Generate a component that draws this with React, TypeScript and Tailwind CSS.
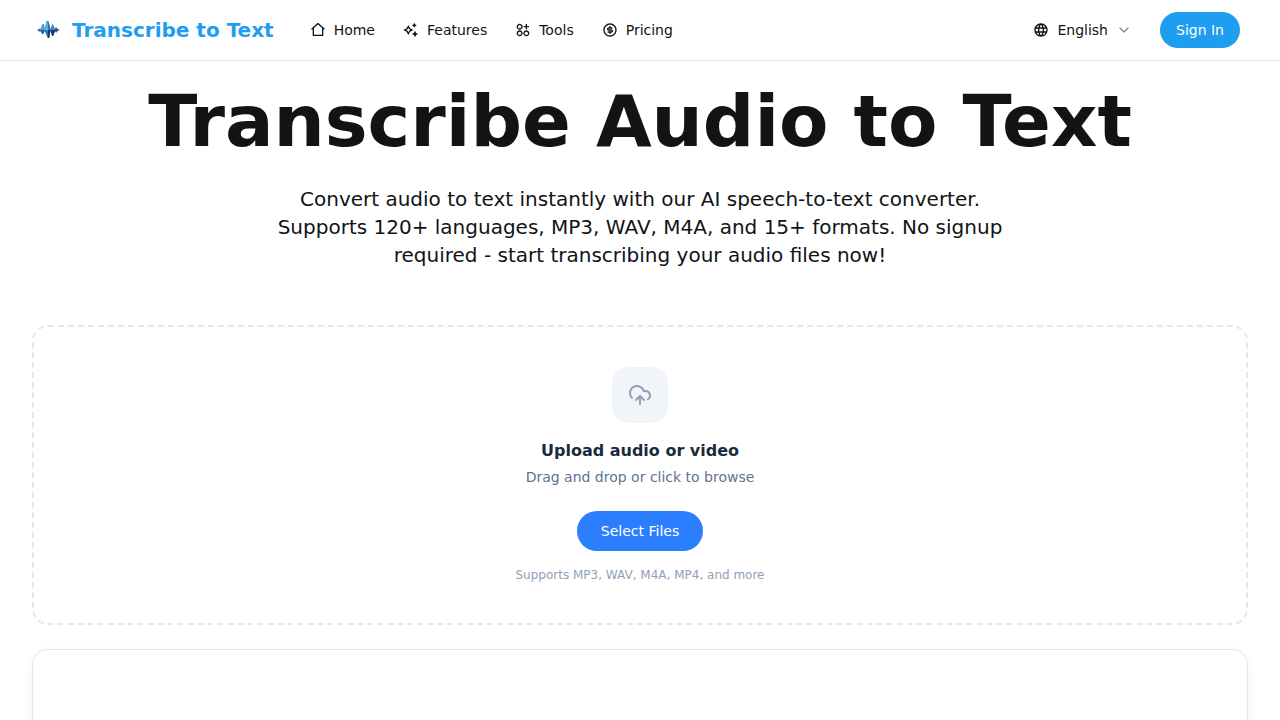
import { ChevronDown, CloudUpload } from "lucide-react";
import { MdLanguage } from "react-icons/md";
import {
  RiApps2AddLine,
  RiHome2Line,
  RiMoneyDollarCircleLine,
  RiSparkling2Line,
} from "react-icons/ri";

const navItems = [
  { title: "Home", icon: RiHome2Line },
  { title: "Features", icon: RiSparkling2Line },
  { title: "Tools", icon: RiApps2AddLine },
  { title: "Pricing", icon: RiMoneyDollarCircleLine },
];

export default function App() {
  return (
    <div className="min-h-screen w-full bg-white font-['DejaVu_Sans',sans-serif] text-[#111315]">
      <Header />

      <main className="px-8 pt-6">
        <section className="flex flex-col items-center gap-7 text-center">
          <h1 className="text-7xl leading-none font-bold">
            Transcribe Audio to Text
          </h1>
          <p className="max-w-3xl text-xl leading-7">
            Convert audio to text instantly with our AI speech-to-text
            converter. Supports 120+ languages, MP3, WAV, M4A, and 15+ formats.
            No signup required - start transcribing your audio files now!
          </p>
        </section>

        <UploadArea />

        {/* Transcript panel */}
        <section className="mt-6 min-h-96 rounded-2xl border border-gray-200 shadow-[0_4px_12px_rgba(0,0,0,0.05)]" />
      </main>
    </div>
  );
}

const Header = () => {
  return (
    <header className="flex items-center justify-between border-b border-gray-200 py-3 pr-10 pl-8">
      <div className="flex items-center gap-9">
        <a href="#" className="flex items-center gap-2">
          <Logo />
          <span className="text-xl font-bold text-[#1e9df1]">
            Transcribe to Text
          </span>
        </a>
        <nav className="flex items-center gap-7">
          {navItems.map((item) => (
            <a
              href="#"
              className="flex items-center gap-2 text-sm"
              key={item.title}
            >
              <item.icon className="size-4" />
              {item.title}
            </a>
          ))}
        </nav>
      </div>

      <div className="flex items-center gap-7">
        <button type="button" className="flex items-center gap-2 text-sm">
          <MdLanguage className="size-4" />
          English
          <ChevronDown className="size-4 opacity-50" />
        </button>
        <button
          type="button"
          className="h-9 rounded-full bg-[#1e9df1] px-4 text-sm text-white"
        >
          Sign In
        </button>
      </div>
    </header>
  );
};

const UploadArea = () => {
  return (
    <section className="mt-14 flex flex-col items-center rounded-2xl border-2 border-dashed border-gray-200 p-10">
      <div className="flex size-14 items-center justify-center rounded-2xl bg-slate-100 text-slate-400">
        <CloudUpload className="size-6" />
      </div>
      <h2 className="mt-4 text-base font-semibold text-slate-800">
        Upload audio or video
      </h2>
      <p className="mt-1 text-sm text-slate-500">
        Drag and drop or click to browse
      </p>
      <button
        type="button"
        className="mt-6 h-10 rounded-full bg-[#2b7fff] px-6 text-sm text-white"
      >
        Select Files
      </button>
      <p className="mt-4 text-xs text-slate-400">
        Supports MP3, WAV, M4A, MP4, and more
      </p>
    </section>
  );
};

const Logo = () => {
  return (
    <svg className="size-8" viewBox="0 0 32 32" aria-hidden="true">
      <path d="M5 16l3-1.8L10 16l-2 2z" fill="#3f6fa8" />
      <path d="M10.2 10h1.6l1.4 5-.4 2-1.6 3h-1L8.2 16z" fill="#4fa3d4" />
      <path d="M8.2 16h4.8l-1.8 4h-1z" fill="#2a5a98" />
      <path d="M14.6 7h1.8l2.2 8-1.4 9h-1.6l-3.2-8z" fill="#2c6fb5" />
      <path d="M14.6 7h1l.6 9.5-3.8-.5z" fill="#5fb2e2" />
      <path d="M16.2 16.5l2.4-1.5-1.4 9h-1z" fill="#142f63" />
      <path d="M20.2 10.5h1l2 5.5-2 6h-1l-2-6z" fill="#3b86c8" />
      <path d="M18.2 16h5l-2 6h-1z" fill="#17346e" />
      <path d="M24 13l1.6 2 2.4 1-2.4 1L24 19l-1.6-3z" fill="#2c548c" />
    </svg>
  );
};
